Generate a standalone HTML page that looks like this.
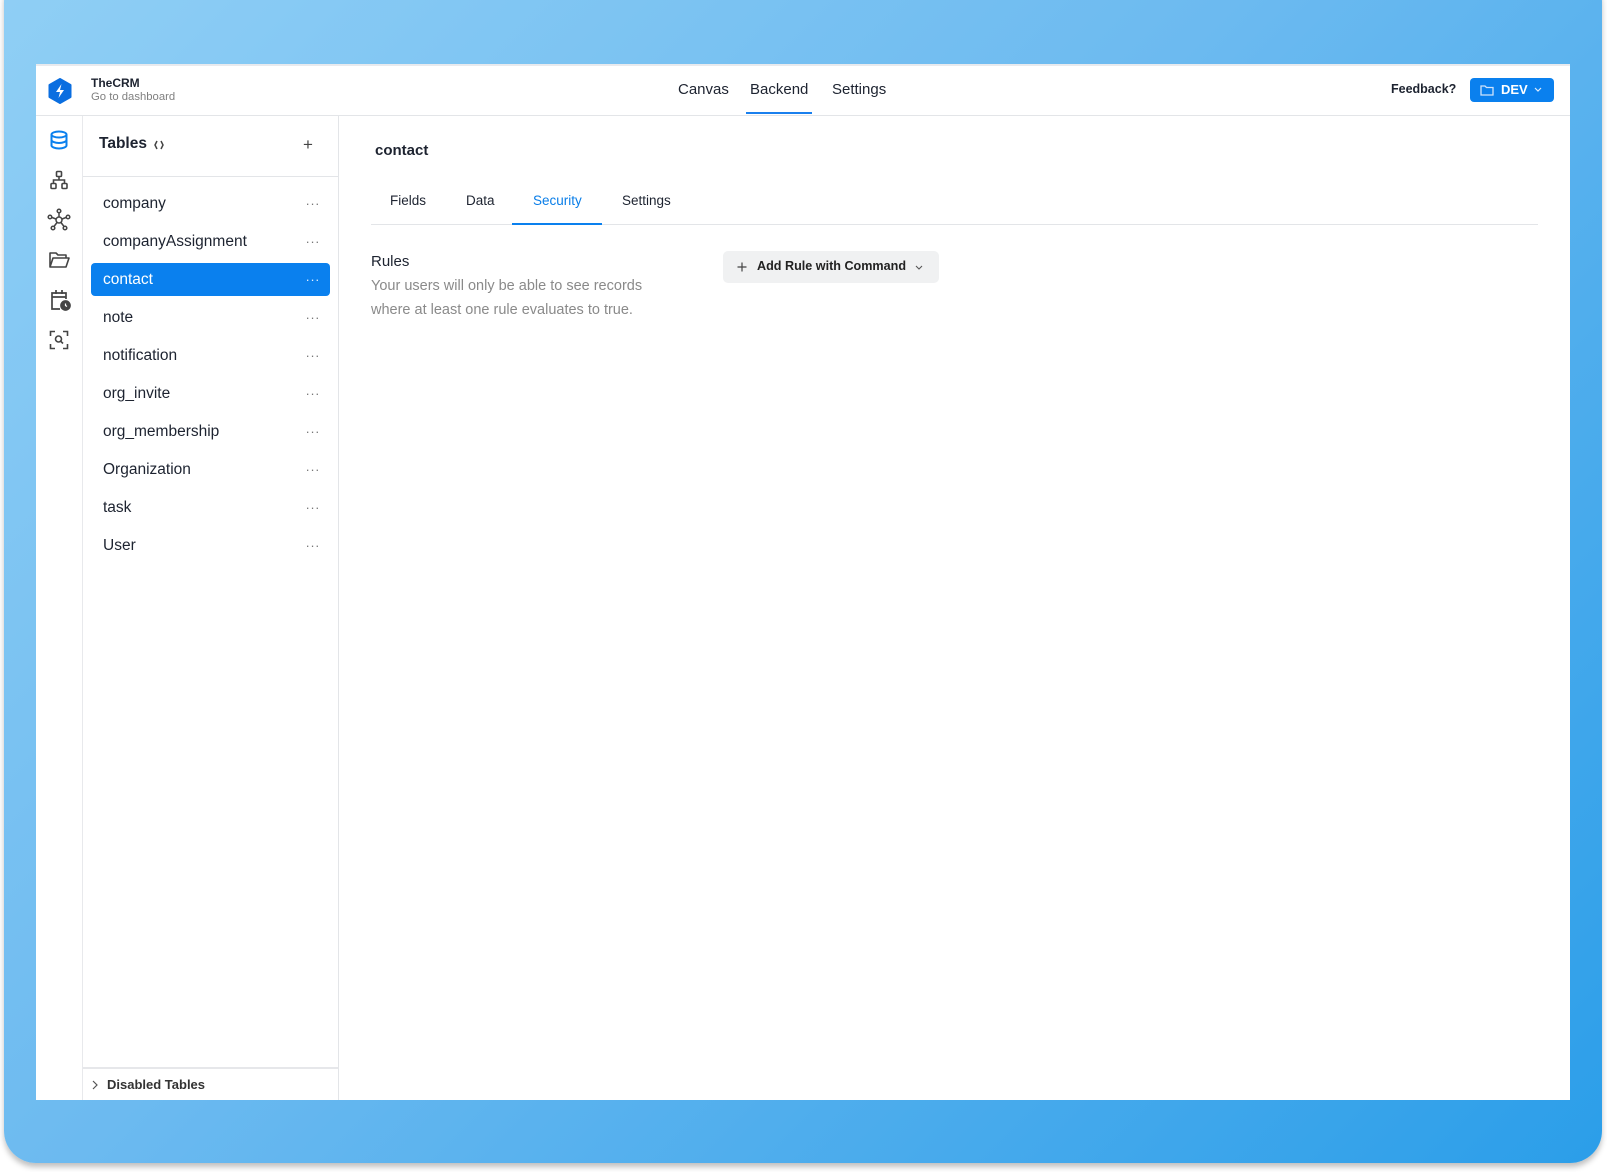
<!DOCTYPE html>
<html><head><meta charset="utf-8"><style>
*{margin:0;padding:0;box-sizing:border-box}
body{width:1607px;height:1172px;background:#fff;font-family:"Liberation Sans",sans-serif;position:relative;overflow:hidden;color:#1d2330}
.card{position:absolute;left:4px;top:-30px;width:1598px;height:1193px;border-radius:32px;background:linear-gradient(135deg,#90cff5 0%,#6cbaf0 45%,#2b9ee9 100%);box-shadow:0 4px 6px rgba(0,0,0,.25)}
.app{position:absolute;left:36px;top:64px;width:1534px;height:1036px;background:#fff;border-top:2px solid #e8eaee}
.a{position:absolute;white-space:nowrap}
.hdr{position:absolute;left:0;top:0;width:100%;height:50px;border-bottom:1px solid #e3e5e8}
.side{position:absolute;left:46px;top:50px;width:1px;bottom:0;background:#e8e9ec}
.tp{position:absolute;left:302px;top:50px;width:1px;bottom:0;background:#e3e5e8}
.item{position:absolute;left:55px;width:239px;height:33px;font-size:15.5px;line-height:33px;padding-left:12px;color:#1d2330;border-radius:4px}
.item .d{position:absolute;right:10px;top:0;font-size:13px;color:#777;letter-spacing:0.5px}
.sel{background:#0a80ee;color:#fff}
.sel .d{color:#e6f0ff}
svg{position:absolute}
</style></head><body>
<div class="card"></div>
<div class="app">
 <div class="hdr"></div>
 <svg style="left:12px;top:12px" width="24" height="26" viewBox="0 0 24 26"><path d="M12 1 L22.5 7 V19 L12 25 L1.5 19 V7Z" fill="#0a6ee0" stroke="#0a6ee0" stroke-linejoin="round" stroke-width="2"/><path d="M13.5 6 L8 14 H12 L10.5 20 L16 12 H12Z" fill="#fff"/></svg>
 <div class="a" style="left:55px;top:10px;font-size:12px;font-weight:bold">TheCRM</div>
 <div class="a" style="left:55px;top:25px;font-size:11.3px;color:#808080">Go to dashboard</div>
 <div class="a" style="left:642px;top:15px;font-size:15px">Canvas</div>
 <div class="a" style="left:714px;top:15px;font-size:15px">Backend</div>
 <div style="position:absolute;left:710px;top:46px;width:66px;height:2px;background:#1a80ee"></div>
 <div class="a" style="left:796px;top:15px;font-size:15px">Settings</div>
 <div class="a" style="left:1355px;top:16px;font-size:12.5px;font-weight:bold">Feedback?</div>
 <div style="position:absolute;left:1434px;top:12px;width:84px;height:24px;background:#0a80ee;border-radius:4px"></div>
 <svg style="left:1444px;top:18px" width="14" height="12" viewBox="0 0 14 12"><path d="M1 2 H5 L6.5 3.5 H13 V11 H1Z" fill="none" stroke="#cfe3fb" stroke-width="1.3"/></svg>
 <div class="a" style="left:1465px;top:16px;font-size:13px;font-weight:bold;color:#fff">DEV</div>
 <svg style="left:1498px;top:21px" width="8" height="6" viewBox="0 0 8 6"><path d="M1 1 L4 4 L7 1" fill="none" stroke="#e0ecfb" stroke-width="1.2"/></svg>

 <div class="side"></div>
 <svg style="left:13px;top:64px" width="20" height="20" viewBox="0 0 20 20" fill="none" stroke="#0a80ee" stroke-width="2"><ellipse cx="10" cy="4.5" rx="7.5" ry="3"/><path d="M2.5 4.5V15.5C2.5 17 6 18.5 10 18.5S17.5 17 17.5 15.5V4.5M2.5 10C2.5 11.5 6 13 10 13S17.5 11.5 17.5 10"/></svg>
 <svg style="left:13px;top:104px" width="20" height="20" viewBox="0 0 20 20" fill="none" stroke="#444" stroke-width="1.6"><rect x="7.5" y="1.5" width="5" height="5" rx="1"/><rect x="2" y="13.5" width="5" height="5" rx="1"/><rect x="13" y="13.5" width="5" height="5" rx="1"/><path d="M10 6.5V10M4.5 13.5V10H15.5V13.5"/></svg>
 <svg style="left:11px;top:142px" width="24" height="24" viewBox="0 0 24 24" fill="none" stroke="#444" stroke-width="1.5"><circle cx="12" cy="12" r="3"/><circle cx="12" cy="3" r="1.8"/><circle cx="3" cy="9" r="1.8"/><circle cx="21" cy="9" r="1.8"/><circle cx="6" cy="20" r="1.8"/><circle cx="18" cy="20" r="1.8"/><path d="M12 5V9M5 9.5L9 11M19 9.5L15 11M7 18.5L10 14.5M17 18.5L14 14.5"/></svg>
 <svg style="left:12px;top:184px" width="22" height="20" viewBox="0 0 22 20" fill="none" stroke="#444" stroke-width="1.6"><path d="M2 17V3H8L10 5H18V8M2 17L5 8H21L18 17Z" stroke-linejoin="round"/></svg>
 <svg style="left:13px;top:222px" width="22" height="24" viewBox="0 0 22 24" fill="none" stroke="#444" stroke-width="1.7"><path d="M11 21H3V5H17V11M3 9H17M7 2V6M13 2V6"/><circle cx="16.5" cy="17.5" r="4.5" fill="#444"/><path d="M16.5 15.5V17.5L18 18.5" stroke="#fff" stroke-width="1.2"/></svg>
 <svg style="left:13px;top:264px" width="20" height="20" viewBox="0 0 20 20" fill="none" stroke="#444" stroke-width="1.6"><path d="M1.5 6V1.5H6M14 1.5H18.5V6M18.5 14V18.5H14M6 18.5H1.5V14"/><circle cx="9.5" cy="9" r="3"/><path d="M11.8 11.3L14 13.5"/></svg>

 <div class="a" style="left:63px;top:69px;font-size:15.5px;font-weight:bold">Tables</div>
 <svg style="left:117px;top:74px" width="12" height="10" viewBox="0 0 12 10" fill="none" stroke="#444" stroke-width="1.5"><path d="M4 1L2 5L4 9M8 1L10 5L8 9"/></svg>
 <div class="a" style="left:267px;top:69px;font-size:17px;color:#444">+</div>
 <div style="position:absolute;left:47px;top:110px;width:255px;height:1px;background:#e3e5e8"></div>
 <div class="item" style="top:121px">company<span class="d">···</span></div>
 <div class="item" style="top:159px">companyAssignment<span class="d">···</span></div>
 <div class="item sel" style="top:197px">contact<span class="d">···</span></div>
 <div class="item" style="top:235px">note<span class="d">···</span></div>
 <div class="item" style="top:273px">notification<span class="d">···</span></div>
 <div class="item" style="top:311px">org_invite<span class="d">···</span></div>
 <div class="item" style="top:349px">org_membership<span class="d">···</span></div>
 <div class="item" style="top:387px">Organization<span class="d">···</span></div>
 <div class="item" style="top:425px">task<span class="d">···</span></div>
 <div class="item" style="top:463px">User<span class="d">···</span></div>
 <div style="position:absolute;left:47px;top:1001px;width:255px;height:2px;background:#e6e7ea"></div>
 <svg style="left:55px;top:1014px" width="8" height="10" viewBox="0 0 8 10"><path d="M2 1L6 5L2 9" fill="none" stroke="#555" stroke-width="1.2"/></svg>
 <div class="a" style="left:71px;top:1011px;font-size:13px;font-weight:bold;color:#333">Disabled Tables</div>
 <div class="tp"></div>

 <div class="a" style="left:339px;top:76px;font-size:15px;font-weight:bold">contact</div>
 <div class="a" style="left:354px;top:127px;font-size:13.5px">Fields</div>
 <div class="a" style="left:430px;top:127px;font-size:13.5px">Data</div>
 <div class="a" style="left:497px;top:127px;font-size:13.5px;color:#0a7ee8">Security</div>
 <div class="a" style="left:586px;top:127px;font-size:13.5px">Settings</div>
 <div style="position:absolute;left:335px;top:158px;width:1167px;height:1px;background:#e3e5e8"></div>
 <div style="position:absolute;left:476px;top:157px;width:90px;height:2px;background:#0a80ee"></div>
 <div class="a" style="left:335px;top:187px;font-size:15px">Rules</div>
 <div class="a" style="left:335px;top:212px;font-size:14.5px;color:#8a8a8a">Your users will only be able to see records</div>
 <div class="a" style="left:335px;top:236px;font-size:14.5px;color:#8a8a8a">where at least one rule evaluates to true.</div>
 <div style="position:absolute;left:687px;top:185px;width:216px;height:32px;background:#f0f1f2;border-radius:5px"></div>
 <svg style="left:701px;top:196px" width="10" height="10" viewBox="0 0 10 10"><path d="M5 0.5V9.5M0.5 5H9.5" stroke="#444" stroke-width="1.2"/></svg>
 <div class="a" style="left:721px;top:193px;font-size:12.6px;font-weight:bold;color:#222">Add Rule with Command</div>
 <svg style="left:879px;top:199px" width="8" height="6" viewBox="0 0 8 6"><path d="M1 1L4 4L7 1" fill="none" stroke="#555" stroke-width="1.1"/></svg>
</div>
</body></html>
